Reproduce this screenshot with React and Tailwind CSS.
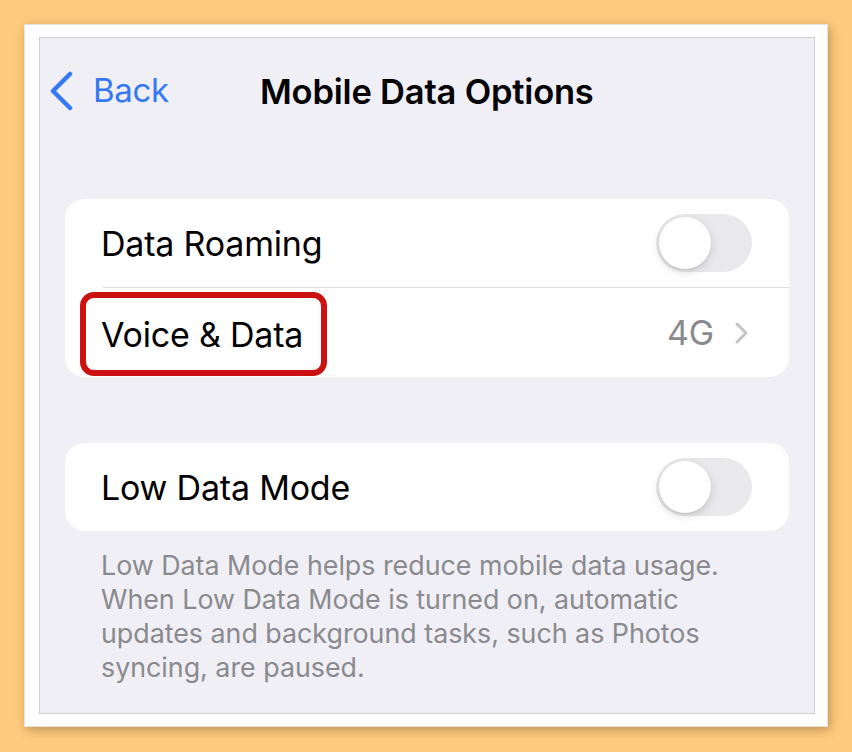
import React from 'react';

function Toggle() {
  return (
    <div className="w-[96px] h-[58px] rounded-full bg-[#e9e9eb] p-[3px] flex items-center">
      <div className="w-[52px] h-[52px] rounded-full bg-white shadow-[0_3px_8px_rgba(0,0,0,0.15),0_1px_1px_rgba(0,0,0,0.08)]" />
    </div>
  );
}

export default function App() {
  return (
    <div
      className="w-[852px] h-[752px] bg-[#fecb7f] pt-[24px] pl-[24px]"
      style={{ fontFamily: 'Inter, "Noto Sans", sans-serif' }}
    >
      {/* white photo frame */}
      <div className="w-[804px] h-[703px] bg-white pt-[12px] pl-[14px] shadow-[2px_3px_10px_rgba(120,80,20,0.45)] border border-[#e6e2dc]">
        {/* iOS screen */}
        <div className="w-[776px] h-[677px] bg-[#f0eff5] border border-[#cfcfd3] flex flex-col">
          {/* nav bar */}
          <div className="relative h-[108px] flex items-center">
            <div className="flex items-center pl-[9px] pb-[2px] text-[#3478f6]">
              <svg width="26" height="40" viewBox="0 0 26 40" className="mr-[18px]">
                <path d="M21 3 L4 20 L21 37" fill="none" stroke="#3478f6" strokeWidth="4.5" strokeLinecap="round" strokeLinejoin="round" />
              </svg>
              <span className="text-[33px] tracking-[-0.3px]">Back</span>
            </div>
            <div className="absolute left-[220px] top-[28px] text-[34.5px] font-semibold text-black tracking-[-0.2px]">
              Mobile Data Options
            </div>
          </div>

          <div className="px-[25px] pt-[53px]">
            {/* group 1 */}
            <div className="bg-white rounded-[20px] overflow-hidden">
              <div className="h-[88px] flex items-center justify-between pl-[36px] pr-[37px]">
                <span className="text-[34px] text-black tracking-[-0.2px]">Data Roaming</span>
                <Toggle />
              </div>
              <div className="ml-[38px] h-px bg-[#dedee2]" />
              <div className="h-[89px] flex items-center justify-between pl-[15px] pr-[39px]">
                <div className="border-[6px] border-[#cc1111] rounded-[14px] h-[84px] flex items-center pl-[15px] pr-[18px] mt-[3px]">
                  <span className="text-[34px] text-black tracking-[-0.2px]">Voice &amp; Data</span>
                </div>
                <div className="flex items-center gap-[20px]">
                  <span className="text-[34px] text-[#8a8a8e] tracking-[-0.2px]">4G</span>
                  <svg width="16" height="24" viewBox="0 0 16 24">
                    <path d="M3 3 L12 12 L3 21" fill="none" stroke="#c4c4c7" strokeWidth="3" strokeLinecap="round" strokeLinejoin="round" />
                  </svg>
                </div>
              </div>
            </div>

            {/* group 2 */}
            <div className="bg-white rounded-[20px] mt-[66px]">
              <div className="h-[88px] flex items-center justify-between pl-[36px] pr-[37px]">
                <span className="text-[34px] text-black tracking-[-0.2px]">Low Data Mode</span>
                <Toggle />
              </div>
            </div>

            <p className="pl-[36px] pr-[30px] pt-[17px] text-[26.8px] leading-[34px] text-[#8a8a8e]">
              Low Data Mode helps reduce mobile data usage. When Low Data Mode is turned on, automatic updates and background tasks, such as Photos syncing, are paused.
            </p>
          </div>
        </div>
      </div>
    </div>
  );
}
